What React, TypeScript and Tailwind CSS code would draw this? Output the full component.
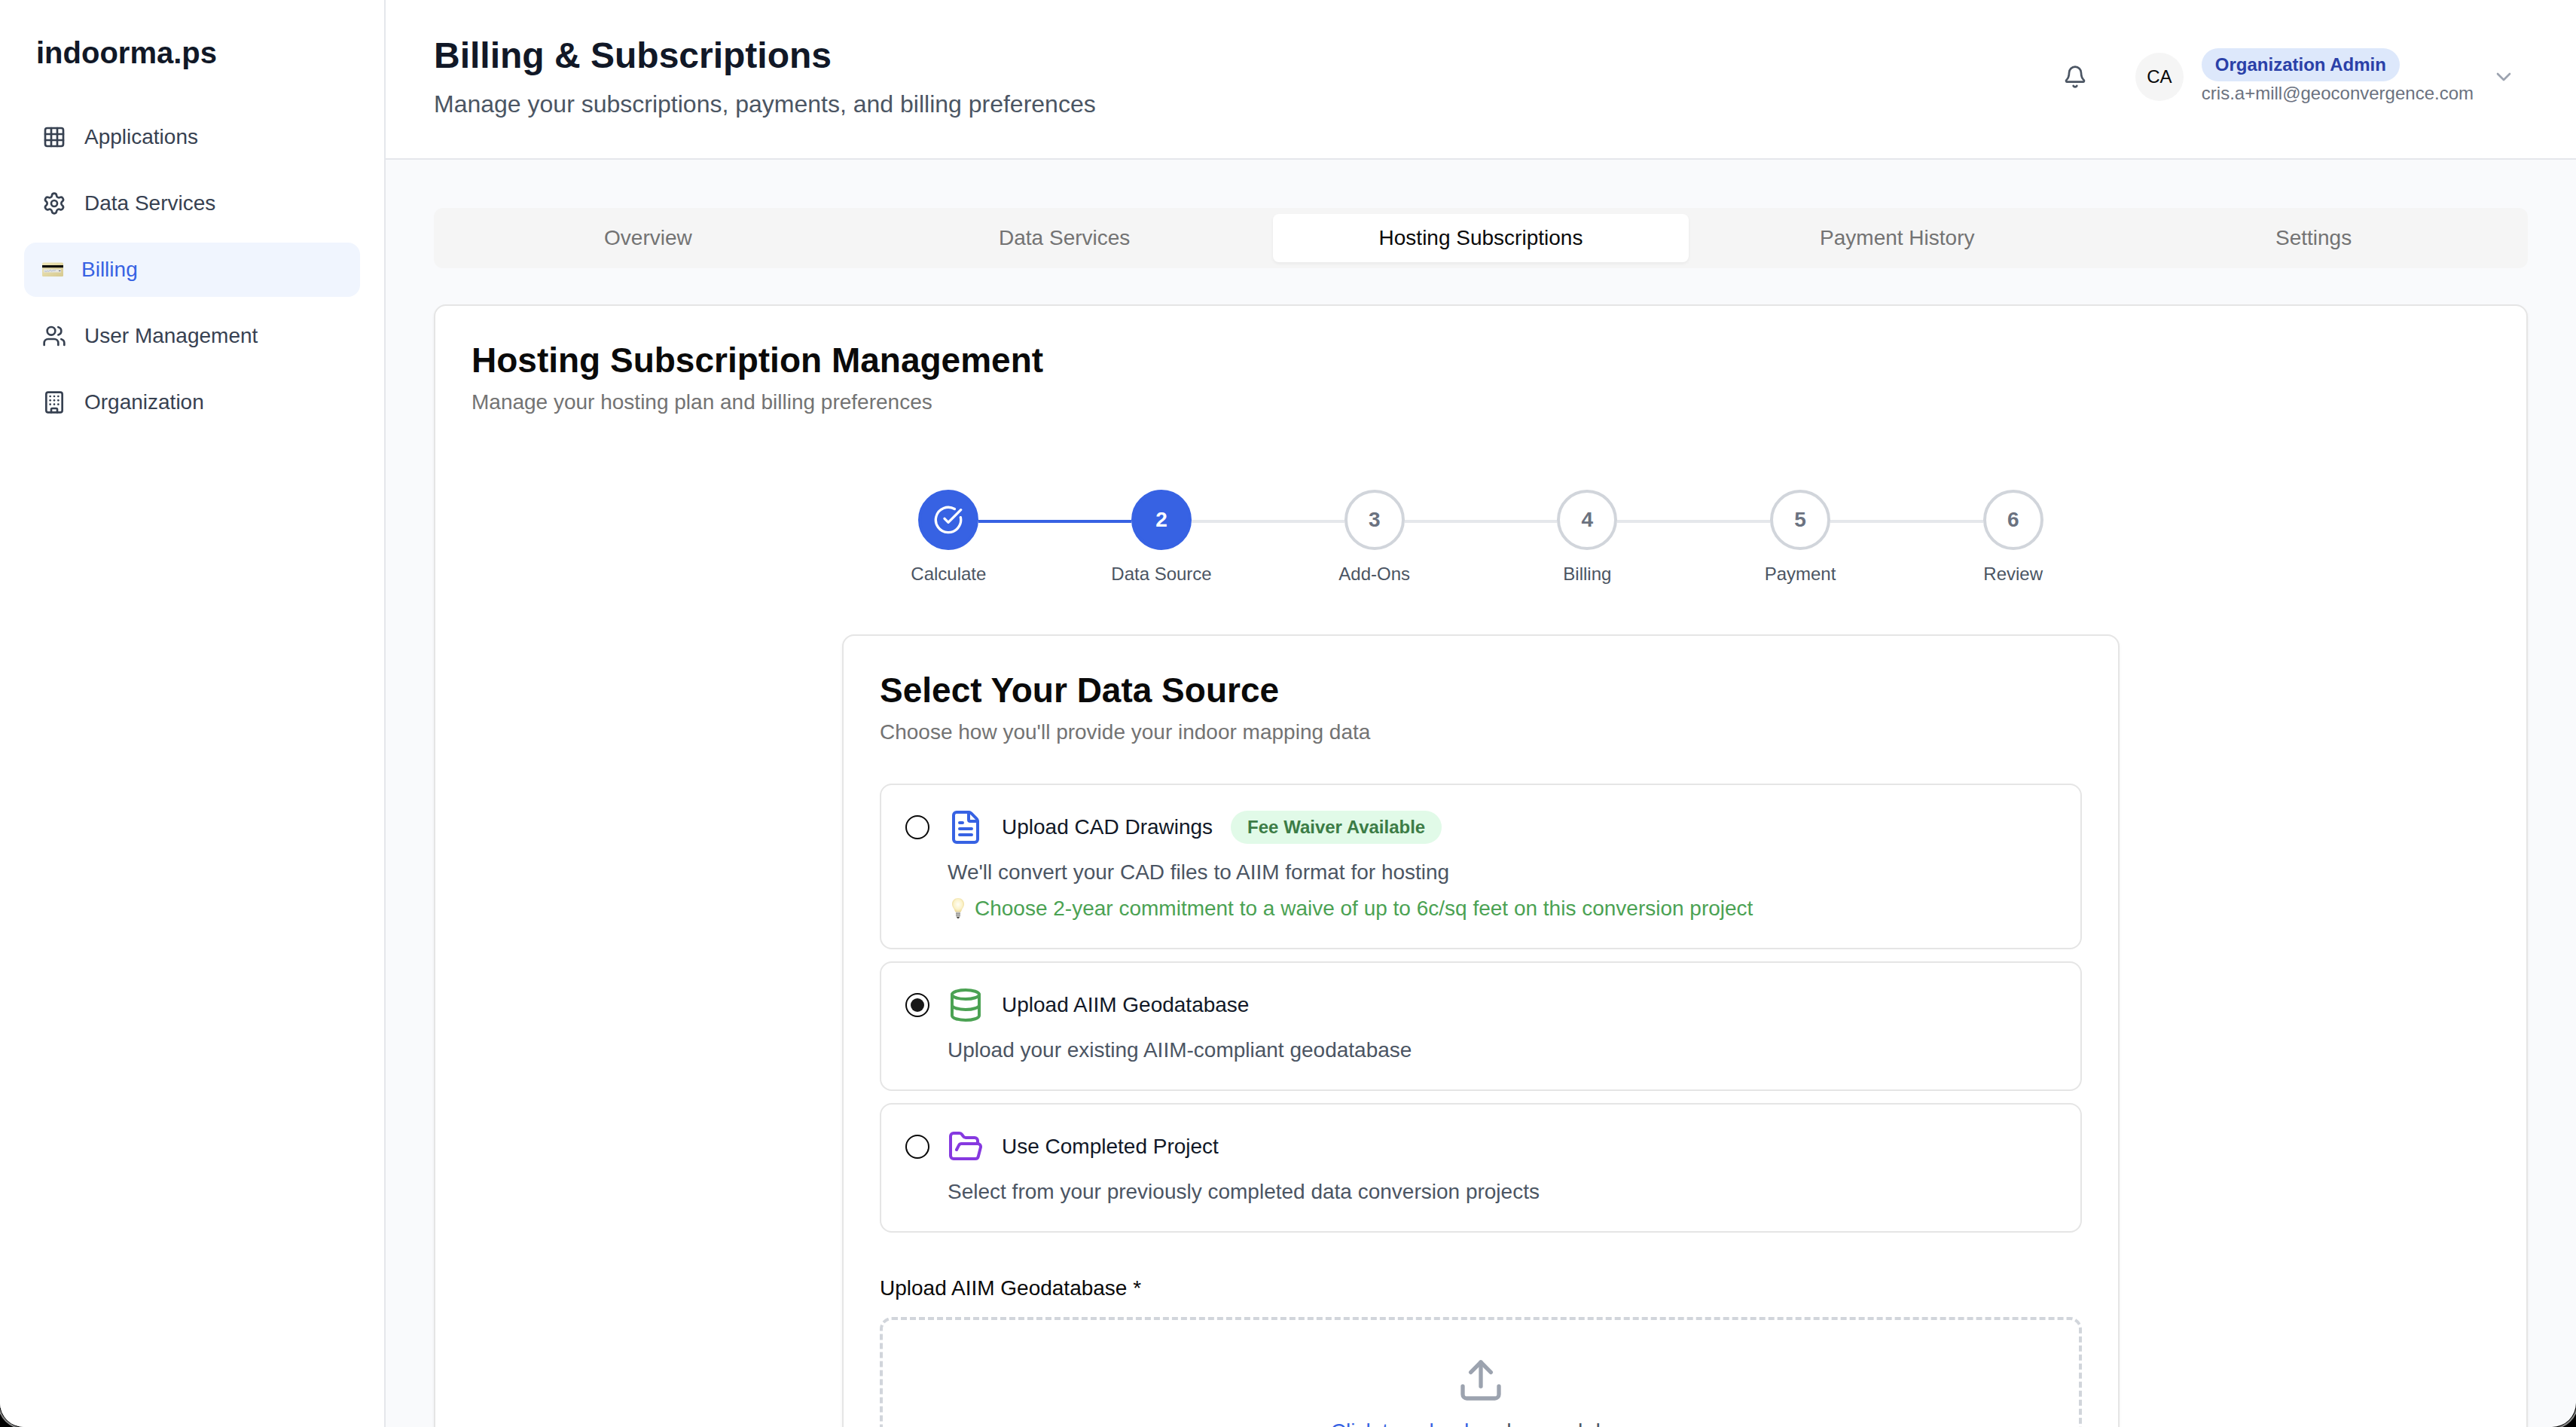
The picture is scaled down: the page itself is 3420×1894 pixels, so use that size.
import {
  Bell,
  Building,
  ChevronDown,
  CircleCheckBig,
  Database,
  FileText,
  FolderOpen,
  Grid3x3,
  Settings,
  Upload,
  Users,
} from 'lucide-react';
import { clsx } from 'clsx';
import { useState } from 'react';

const CreditCardEmoji = () => (
  <svg viewBox="0 0 28 20" className="h-5 w-7 shrink-0" aria-hidden="true">
    <defs>
      <linearGradient id="card-gold" x1="0" y1="0" x2="1" y2="1">
        <stop offset="0" stopColor="#eee6ba" />
        <stop offset="1" stopColor="#d6c98f" />
      </linearGradient>
    </defs>
    <rect x="0" y="0.5" width="28" height="18.5" rx="1.5" fill="url(#card-gold)" />
    <rect x="0" y="4" width="28" height="3.2" fill="#0c0c08" />
    <rect x="2" y="9.5" width="23" height="4" fill="#e6e6e0" />
    <path d="M3 12.500c1-2 2 1 3-.5s2 1 3 0 2-2 3-.5 2-1.500 3-.5 2-1 3 0" stroke="#9aa9c9" strokeWidth="0.8" fill="none" />
    <path d="M22 11.500h2.500" stroke="#5c6070" strokeWidth="1" />
  </svg>
);

const LightBulbEmoji = () => (
  <svg viewBox="0 0 28 28" className="size-7 shrink-0" aria-hidden="true">
    <defs>
      <radialGradient id="bulb-glow" cx="0.5" cy="0.45" r="0.6">
        <stop offset="0" stopColor="#fffef6" />
        <stop offset="0.6" stopColor="#fbf2c8" />
        <stop offset="1" stopColor="#e6cf86" />
      </radialGradient>
    </defs>
    <path
      d="M14 0c-4.500 0-8 3.400-8 7.900 0 3.400 2.100 5.100 3.100 7.600.5 1.300.8 2.600 1.600 3h6.600c.8-.4 1.100-1.700 1.600-3 1-2.500 3.100-4.200 3.100-7.600 0-4.500-3.500-7.900-8-7.900z"
      fill="url(#bulb-glow)"
    />
    <path d="M11 18.500h6v5.500l-1.200 1.500h-3.600l-1.200-1.500z" fill="#bdbcb8" />
    <path d="M11 20.500h6M11 22.800h6" stroke="#8f8e8a" strokeWidth="0.7" />
    <path d="M12 25h4l-1 2h-2z" fill="#4f4d48" />
  </svg>
);

const NAV_ITEMS = [
  { label: 'Applications', icon: <Grid3x3 className="size-8" /> },
  { label: 'Data Services', icon: <Settings className="size-8" /> },
  { label: 'Billing', icon: <CreditCardEmoji />, active: true },
  { label: 'User Management', icon: <Users className="size-8" /> },
  { label: 'Organization', icon: <Building className="size-8" /> },
];

const TABS = ['Overview', 'Data Services', 'Hosting Subscriptions', 'Payment History', 'Settings'];

const STEPS = ['Calculate', 'Data Source', 'Add-Ons', 'Billing', 'Payment', 'Review'];
const CURRENT_STEP = 1;

const SOURCES = [
  {
    id: 'cad',
    title: 'Upload CAD Drawings',
    description: "We'll convert your CAD files to AIIM format for hosting",
    icon: <FileText className="size-12 text-[#3762e3]" />,
    badge: 'Fee Waiver Available',
    hint: 'Choose 2-year commitment to a waive of up to 6c/sq feet on this conversion project',
  },
  {
    id: 'geodatabase',
    title: 'Upload AIIM Geodatabase',
    description: 'Upload your existing AIIM-compliant geodatabase',
    icon: <Database className="size-12 text-[#4ba253]" />,
  },
  {
    id: 'project',
    title: 'Use Completed Project',
    description: 'Select from your previously completed data conversion projects',
    icon: <FolderOpen className="size-12 text-[#8639e0]" />,
  },
];

const Sidebar = () => (
  <aside className="w-[512px] shrink-0 border-r-2 border-[#e5e7eb] bg-white">
    <div className="px-12 pt-[42px] pb-12">
      <span className="block text-[40px] leading-[56px] font-bold text-[#111827]">indoorma.ps</span>
    </div>

    <nav className="flex flex-col gap-4 px-8">
      {NAV_ITEMS.map(({ label, icon, active }) => (
        <a
          key={label}
          href="#"
          className={clsx(
            'flex h-[72px] items-center gap-6 rounded-2xl px-6 text-[28px] leading-10',
            active ? 'bg-[#f0f5fe] text-[#3762e3]' : 'text-[#374151]',
          )}
        >
          {icon}
          {label}
        </a>
      ))}
    </nav>
  </aside>
);

const Header = () => (
  <header className="flex items-center justify-between border-b-2 border-[#e5e7eb] bg-white px-16 pt-[42px] pb-12">
    <div>
      <h1 className="text-[48px] leading-[64px] font-bold text-[#111827]">Billing & Subscriptions</h1>
      <p className="mt-2 text-[32px] leading-[48px] text-[#4b5563]">
        Manage your subscriptions, payments, and billing preferences
      </p>
    </div>

    <div className="flex items-center gap-12">
      <button type="button" aria-label="Notifications" className="p-4 text-[#4b5563]">
        <Bell className="size-8" />
      </button>

      <button type="button" className="flex items-center gap-6 pr-4 text-left text-[24px] leading-8">
        <span className="flex size-16 items-center justify-center rounded-full bg-[#f5f5f5] text-[#0a0a0a]">CA</span>
        <span className="flex flex-col items-start">
          <span className="rounded-full bg-[#dde8fb] px-[18px] py-[6px] font-bold text-[#2a40a8]">
            Organization Admin
          </span>
          <span className="text-[#6b7280]">cris.a+mill@geoconvergence.com</span>
        </span>
        <ChevronDown className="size-8 text-[#9ca3af]" />
      </button>
    </div>
  </header>
);

const Stepper = () => (
  <ol className="flex">
    {STEPS.map((step, i) => (
      <li key={step} className="flex flex-1 flex-col items-center">
        <div className="flex w-full items-center">
          <span
            className={clsx('mt-1 h-1 flex-1', i > 0 && (i <= CURRENT_STEP ? 'bg-[#3762e3]' : 'bg-[#e5e7eb]'))}
          />
          <span
            className={clsx(
              'flex size-20 items-center justify-center rounded-full border-4 text-[28px] leading-10 font-bold',
              i <= CURRENT_STEP
                ? 'border-[#3762e3] bg-[#3762e3] text-white'
                : 'border-[#d1d5db] bg-white text-[#6b7280]',
            )}
          >
            {i < CURRENT_STEP ? <CircleCheckBig className="size-10" /> : i + 1}
          </span>
          <span
            className={clsx(
              'mt-1 h-1 flex-1',
              i < STEPS.length - 1 && (i < CURRENT_STEP ? 'bg-[#3762e3]' : 'bg-[#e5e7eb]'),
            )}
          />
        </div>
        <span className="mt-4 text-[24px] leading-8 text-[#4b5563]">{step}</span>
      </li>
    ))}
  </ol>
);

const SourcePicker = () => {
  const [source, setSource] = useState('geodatabase');

  return (
    <div role="radiogroup" aria-label="Data source" className="flex flex-col gap-4">
      {SOURCES.map(({ id, title, description, icon, badge, hint }) => (
        <label
          key={id}
          htmlFor={id}
          className="flex items-start gap-6 rounded-2xl border-2 border-[#e5e5e5] p-8 text-[28px] leading-10"
        >
          <input
            type="radio"
            name="source"
            id={id}
            checked={source === id}
            onChange={() => setSource(id)}
            className="mt-2 grid size-8 shrink-0 appearance-none place-content-center rounded-full border-2 border-[#0a0a0a] before:size-[18px] before:rounded-full checked:before:bg-[#171717]"
          />
          <span className="flex flex-col">
            <span className="flex h-12 items-center gap-6 text-[#111827]">
              {icon}
              {title}
              {badge && (
                <span className="rounded-full bg-[#e1fae8] px-[22px] py-[6px] text-[24px] leading-8 font-bold text-[#3c7c46]">
                  {badge}
                </span>
              )}
            </span>
            <span className="mt-4 text-[#4b5563]">{description}</span>
            {hint && (
              <span className="mt-2 flex items-center gap-2 text-[#4ba253]">
                <LightBulbEmoji />
                {hint}
              </span>
            )}
          </span>
        </label>
      ))}
    </div>
  );
};

const CardHeading = ({ title, subtitle }: { title: string; subtitle: string }) => (
  <div className="mb-12 flex flex-col gap-3">
    <h2 className="text-[46px] leading-[48px] font-bold text-[#0a0a0a]">{title}</h2>
    <p className="text-[28px] leading-10 text-[#737373]">{subtitle}</p>
  </div>
);

export default function App() {
  const [tab, setTab] = useState('Hosting Subscriptions');

  return (
    <div className="h-screen overflow-hidden bg-black font-['Liberation_Sans',Arial,sans-serif]">
      <div className="flex h-full overflow-hidden rounded-b-[32px] bg-[#f9fafc] shadow-[0_0_0_1px_#000,0_0_0_3px_#8b8b8b]">
        <Sidebar />

        <div className="flex min-w-0 flex-1 flex-col">
          <Header />

          <main className="min-h-0 flex-1 overflow-hidden p-16">
            <div role="tablist" className="grid grid-cols-5 rounded-xl bg-[#f5f5f5] p-2">
              {TABS.map((name) => (
                <button
                  key={name}
                  type="button"
                  role="tab"
                  aria-selected={tab === name}
                  onClick={() => setTab(name)}
                  className={clsx(
                    'rounded-lg py-3 text-[28px] leading-10',
                    tab === name ? 'bg-white text-[#0a0a0a] shadow-[0_2px_4px_rgba(0,0,0,0.05)]' : 'text-[#737373]',
                  )}
                >
                  {name}
                </button>
              ))}
            </div>

            <section className="mt-12 rounded-2xl border-2 border-[#e5e5e5] bg-white p-12 shadow-[0_2px_4px_rgba(0,0,0,0.05)]">
              <CardHeading title="Hosting Subscription Management" subtitle="Manage your hosting plan and billing preferences" />

              <div className="mx-auto max-w-[1792px] p-12">
                <Stepper />

                <section className="mt-16 rounded-2xl border-2 border-[#e5e5e5] bg-white p-12 shadow-[0_2px_4px_rgba(0,0,0,0.05)]">
                  <CardHeading title="Select Your Data Source" subtitle="Choose how you'll provide your indoor mapping data" />

                  <SourcePicker />

                  <div className="mt-[52px] flex flex-col gap-4">
                    <label htmlFor="geodatabase-file" className="text-[28px] leading-[44px] text-[#0a0a0a]">
                      Upload AIIM Geodatabase *
                    </label>
                    <label
                      htmlFor="geodatabase-file"
                      className="flex flex-col items-center gap-4 rounded-2xl border-4 border-dashed border-[#d1d5db] p-12 text-[28px] leading-10 text-[#4b5563]"
                    >
                      <Upload className="size-16 text-[#9ca3af]" />
                      <span>
                        <span className="text-[#3762e3]">Click to upload</span> or drag and drop
                      </span>
                      <input type="file" id="geodatabase-file" className="sr-only" />
                    </label>
                  </div>
                </section>
              </div>
            </section>
          </main>
        </div>
      </div>
    </div>
  );
}
